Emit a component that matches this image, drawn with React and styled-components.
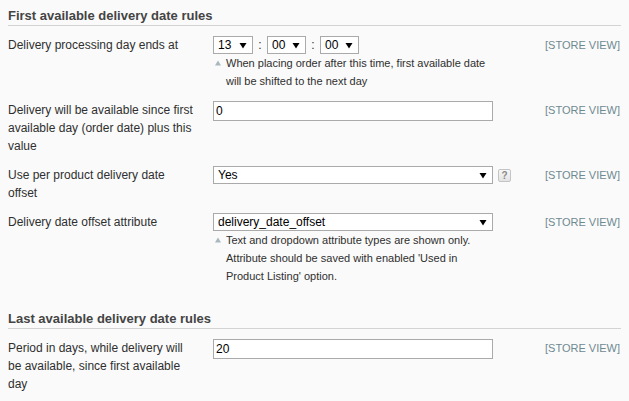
import React from 'react';
import styled, { createGlobalStyle } from 'styled-components';

const GlobalStyle = createGlobalStyle`
  html, body { margin: 0; padding: 0; background: #fafafa; }
  body {
    padding: 8px;
    font-family: "Liberation Sans", Arial, sans-serif;
    font-size: 12px;
    color: #2f2f2f;
  }
`;

const Page = styled.div`
  display: flex;
  flex-direction: column;
`;

const Section = styled.section`
  display: flex;
  flex-direction: column;
  margin-bottom: 20px;
`;

const Heading = styled.h4`
  margin: 0;
  padding: 0 0 1px;
  font-size: 13px;
  line-height: 16px;
  font-weight: bold;
  color: #444;
  border-bottom: 1px solid #d3d3d3;
`;

const List = styled.div`
  padding-top: 5px;
  display: flex;
  flex-direction: column;
`;

const Row = styled.div`
  display: grid;
  grid-template-columns: 205px 332px auto;
  padding: 5px 0 6px;
  line-height: 18px;
`;

const Label = styled.div`
  padding-right: 18px;
`;

const Value = styled.div`
  display: flex;
  flex-direction: column;
  align-items: flex-start;
`;

const Scope = styled.div`
  font-size: 11px;
  color: #6f8992;
  line-height: 18px;
`;

const Controls = styled.div`
  display: flex;
  align-items: center;
`;

const SelectBox = styled.div`
  box-sizing: border-box;
  width: ${p => p.$width}px;
  height: 18px;
  display: flex;
  align-items: center;
  justify-content: space-between;
  padding: 0 5px 0 4px;
  background: #fff;
  border: 1px solid #aaa;
  color: #000;
  font-size: 12px;
  line-height: 16px;
`;

const Colon = styled.span`
  width: 14px;
  text-align: center;
  color: #2f2f2f;
  line-height: 18px;
`;

const TextInput = styled.div`
  box-sizing: border-box;
  width: 280px;
  height: 20px;
  padding: 0 2px;
  background: #fff;
  border: 1px solid #aaa;
  color: #000;
  font-size: 12px;
  line-height: 18px;
`;

const HelpIcon = styled.span`
  box-sizing: border-box;
  margin-left: 5px;
  width: 13px;
  height: 13px;
  border: 1px solid #c4c4c4;
  border-radius: 2px;
  background: linear-gradient(#f7f7f7, #e3e3e3);
  color: #8a8a8a;
  font-size: 10px;
  font-weight: bold;
  line-height: 11px;
  text-align: center;
`;

const Note = styled.div`
  box-sizing: border-box;
  width: 280px;
  display: flex;
  font-size: 11px;
  line-height: 18px;
  color: #2f2f2f;
`;

const NoteMark = styled.svg`
  flex: none;
  width: 13px;
  height: 18px;
`;

const Arrow = () => (
  <svg width="8" height="7" viewBox="0 0 8 7">
    <path d="M0.5 1 L7.5 1 L4 6.5 Z" fill="#000" />
  </svg>
);

const Select = ({ width, value }) => (
  <SelectBox $width={width}>
    <span>{value}</span>
    <Arrow />
  </SelectBox>
);

const NoteText = ({ children }) => (
  <Note>
    <NoteMark viewBox="0 0 13 18">
      <path d="M2 11.5 L8 11.5 L5 6.5 Z" fill="#a9b7bf" />
    </NoteMark>
    <span>{children}</span>
  </Note>
);

const STORE = '[STORE VIEW]';

export default function App() {
  return (
    <Page>
      <GlobalStyle />
      <Section>
        <Heading>First available delivery date rules</Heading>
        <List>
          <Row>
            <Label>Delivery processing day ends at</Label>
            <Value>
              <Controls>
                <Select width={40} value="13" />
                <Colon>:</Colon>
                <Select width={39} value="00" />
                <Colon>:</Colon>
                <Select width={39} value="00" />
              </Controls>
              <NoteText>When placing order after this time, first available date will be shifted to the next day</NoteText>
            </Value>
            <Scope>{STORE}</Scope>
          </Row>
          <Row>
            <Label>Delivery will be available since first available day (order date) plus this value</Label>
            <Value>
              <TextInput>0</TextInput>
            </Value>
            <Scope>{STORE}</Scope>
          </Row>
          <Row>
            <Label>Use per product delivery date offset</Label>
            <Value>
              <Controls>
                <Select width={280} value="Yes" />
                <HelpIcon>?</HelpIcon>
              </Controls>
            </Value>
            <Scope>{STORE}</Scope>
          </Row>
          <Row>
            <Label>Delivery date offset attribute</Label>
            <Value>
              <Select width={280} value="delivery_date_offset" />
              <NoteText>Text and dropdown attribute types are shown only. Attribute should be saved with enabled 'Used in Product Listing' option.</NoteText>
            </Value>
            <Scope>{STORE}</Scope>
          </Row>
        </List>
      </Section>
      <Section>
        <Heading>Last available delivery date rules</Heading>
        <List>
          <Row>
            <Label>Period in days, while delivery will be available, since first available day</Label>
            <Value>
              <TextInput>20</TextInput>
            </Value>
            <Scope>{STORE}</Scope>
          </Row>
        </List>
      </Section>
    </Page>
  );
}
